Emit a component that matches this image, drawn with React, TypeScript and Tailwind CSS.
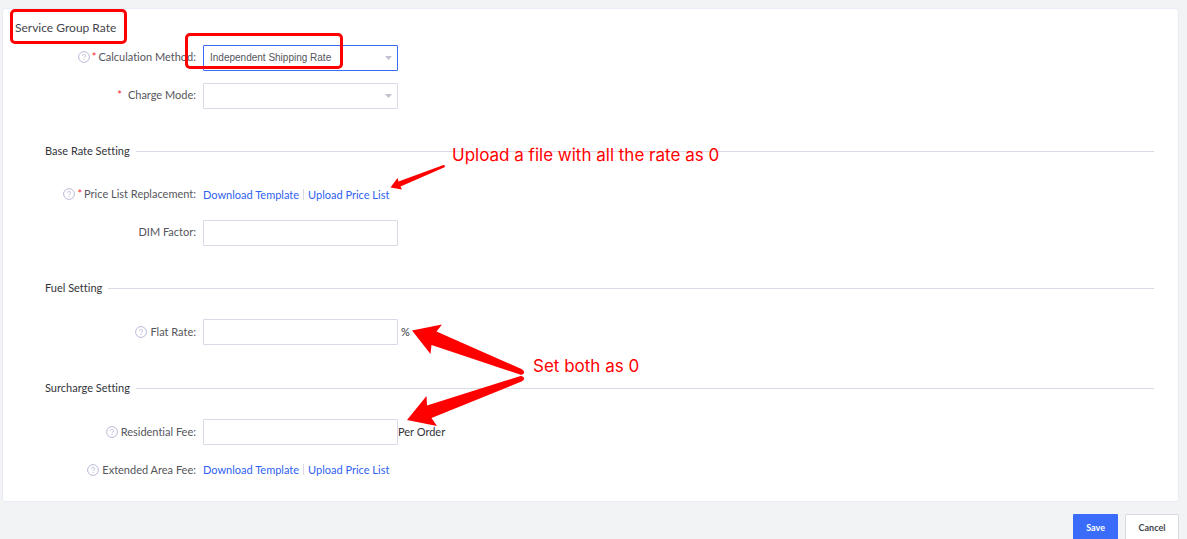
import type { ReactNode } from "react";

function HelpIcon() {
  return (
    <svg viewBox="0 0 12 12" className="h-3 w-3 shrink-0" fill="none" stroke="#b9bad6" aria-hidden="true">
      <circle cx="6" cy="6" r="5.4" strokeWidth="1" />
      <path d="M4.5 4.8a1.5 1.5 0 1 1 2.3 1.2c-.5.3-.8.6-.8 1.1" strokeWidth="0.9" />
      <path d="M6 8.1v1" strokeWidth="1" />
    </svg>
  );
}

type RowProps = {
  label: string;
  htmlFor?: string;
  help?: boolean;
  required?: boolean;
  wide?: boolean;
  children: ReactNode;
};

function Row({ label, htmlFor, help, required, wide, children }: RowProps) {
  const helpOnly = help && !required;
  return (
    <div className="grid h-[26px] grid-cols-[151px_1fr] items-center gap-[7px]">
      <div
        className={
          helpOnly
            ? "flex items-center justify-end gap-[3px] whitespace-nowrap text-[#55565c]"
            : "flex items-center justify-end whitespace-nowrap pb-0.5 text-[#55565c]"
        }
      >
        {help && <HelpIcon />}
        {required && (
          <span className={wide ? "mr-[6px] text-[#f5222d]" : "ml-0.5 mr-0.5 text-[#f5222d]"}>*</span>
        )}
        {htmlFor ? <label htmlFor={htmlFor}>{label}</label> : <span>{label}</span>}
      </div>
      <div className="flex items-center">{children}</div>
    </div>
  );
}

function SelectBox({ id, options, active }: { id: string; options: string[]; active?: boolean }) {
  return (
    <div className="relative w-[195px]">
      <select
        id={id}
        className={
          active
            ? "block h-[26px] w-full appearance-none rounded-[1px] border border-[#3a6cf6] bg-white px-1.5 font-['Liberation_Sans',sans-serif] text-[10px] text-[#55565c] outline-none"
            : "block h-[26px] w-full appearance-none rounded-[1px] border border-[#d9dae8] bg-white px-1.5 font-['Liberation_Sans',sans-serif] text-[10px] text-[#55565c] outline-none"
        }
      >
        {options.map((o) => (
          <option key={o}>{o}</option>
        ))}
      </select>
      <svg viewBox="0 0 7 4" className="pointer-events-none absolute right-[6px] top-[11px] h-1 w-[7px]" fill="#c0c1cf" aria-hidden="true">
        <path d="M0 0h7L3.5 4z" />
      </svg>
    </div>
  );
}

function TextBox({ id }: { id: string }) {
  return (
    <input
      id={id}
      type="text"
      className="h-[26px] w-[195px] rounded-[1px] border border-[#d9dae8] bg-white px-1.5 outline-none"
    />
  );
}

function Section({ title, children }: { title: string; children: ReactNode }) {
  return (
    <section>
      <div className="flex h-[18px] items-center gap-[6px]">
        <h2 className="text-[#33343a]">{title}</h2>
        <div className="h-px flex-1 bg-[#d9dae5]" />
      </div>
      <div className="mt-[22px] flex flex-col gap-3">{children}</div>
    </section>
  );
}

function PriceLinks() {
  return (
    <div className="flex items-center pb-px text-[#2f62f0]">
      <a href="#template">Download Template</a>
      <span className="mx-1 h-[11px] w-px bg-[#d9dae5]" />
      <a href="#upload">Upload Price List</a>
    </div>
  );
}

function Annotations() {
  return (
    <div className="pointer-events-none absolute left-0 top-0 font-[Inter,sans-serif] text-[17px] leading-6 text-[#ff0000]">
      <div className="absolute left-[10px] top-[9px] h-[35px] w-[117px] rounded-[5px] border-3 border-[#ff0000]" />
      <div className="absolute left-[185px] top-[33px] h-[36px] w-[158px] rounded-[5px] border-3 border-[#ff0000]" />
      <svg viewBox="0 0 560 440" className="absolute left-0 top-0 h-[440px] w-[560px]" fill="#ff0000" aria-hidden="true">
        <path d="M390.500 187.500 397.500 178 398.500 181.500 443.500 165Q445.800 165.200 444.500 167.200L400.500 186.500 402 189.500Z" />
        <path d="M412 330.500 442 324.500 436.500 331.500 521.500 369Q524.500 370.500 524 373 523 375.500 520 374.500L431.500 345 430.500 354Z" />
        <path d="M407 420 426.500 396 427 405.500 520.500 376Q523.500 375.500 524.200 378.500 524 380.500 521.500 381.500L431.500 418 437 426Z" />
      </svg>
      <p className="absolute left-[452px] top-[143px] whitespace-nowrap">Upload a file with all the rate as 0</p>
      <p className="absolute left-[533px] top-[354px] whitespace-nowrap">Set both as 0</p>
    </div>
  );
}

export default function App() {
  return (
    <div className="relative h-screen overflow-hidden bg-[#f2f3f5] pl-0.5 pr-2 pt-2 font-[Lato,sans-serif] text-[11px] leading-4 [font-variant-ligatures:none]">
      <main className="rounded-[3px] border border-[#e9ebf8] bg-white pb-[18px] pl-[42px] pr-6 pt-[10px]">
        <h1 className="-ml-[30px] text-[12px] leading-[18px] text-[#44454b]">Service Group Rate</h1>
        <div className="mb-[33px] mt-2 flex flex-col gap-3">
          <Row label="Calculation Method:" htmlFor="method" help required>
            <SelectBox id="method" options={["Independent Shipping Rate"]} active />
          </Row>
          <Row label="Charge Mode:" htmlFor="mode" required wide>
            <SelectBox id="mode" options={[""]} />
          </Row>
        </div>
        <div className="flex flex-col gap-[33px]">
          <Section title="Base Rate Setting">
            <Row label="Price List Replacement:" help required>
              <PriceLinks />
            </Row>
            <Row label="DIM Factor:" htmlFor="dim">
              <TextBox id="dim" />
            </Row>
          </Section>
          <Section title="Fuel Setting">
            <Row label="Flat Rate:" htmlFor="flat" help>
              <TextBox id="flat" />
              <span className="ml-[3px] text-[#33343a]">%</span>
            </Row>
          </Section>
          <div className="pt-px">
            <Section title="Surcharge Setting">
              <Row label="Residential Fee:" htmlFor="residential" help>
                <TextBox id="residential" />
                <span className="text-[#33343a]">Per Order</span>
              </Row>
              <Row label="Extended Area Fee:" help>
                <PriceLinks />
              </Row>
            </Section>
          </div>
        </div>
      </main>
      <footer className="mt-3 flex justify-end gap-[7px] text-[9px] font-bold">
        <button type="button" className="h-7 rounded-[1px] bg-[#3a6cf9] px-[13px] text-white">Save</button>
        <button type="button" className="h-7 w-[54px] rounded-[1px] border border-[#d9dae5] bg-white text-[#44454b]">Cancel</button>
      </footer>
      <Annotations />
    </div>
  );
}
